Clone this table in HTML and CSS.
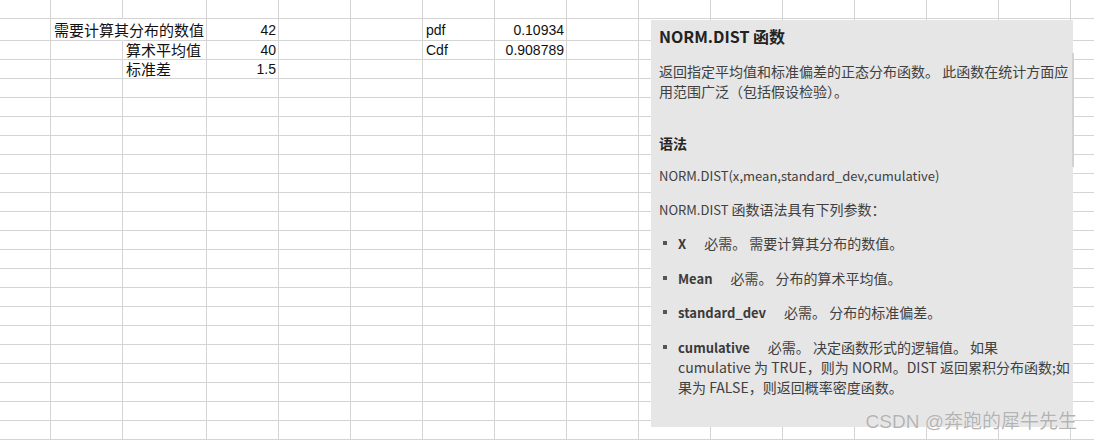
FILE: index.html
```html
<!DOCTYPE html>
<html lang="zh-CN">
<head>
<meta charset="utf-8">
<title>NORM.DIST</title>
<link rel="stylesheet" href="styles.css">
</head>
<body>
<main class="sheet">
  <div class="row"><span></span><span></span><span></span><span></span><span></span><span></span><span></span><span></span><span></span><span></span><span></span><span></span><span></span><span></span><span></span><span></span></div>
  <div class="row tall"><span></span><span class="nb"></span><span class="r"><em class="cjk">需要计算其分布的数值</em></span><span class="r">42</span><span></span><span></span><span>pdf</span><span class="r">0.10934</span><span></span><span></span><span></span><span></span><span></span><span></span><span></span><span></span></div>
  <div class="row"><span></span><span></span><span><em class="cjk">算术平均值</em></span><span class="r">40</span><span></span><span></span><span>Cdf</span><span class="r">0.908789</span><span></span><span></span><span></span><span></span><span></span><span></span><span></span><span></span></div>
  <div class="row"><span></span><span></span><span><em class="cjk">标准差</em></span><span class="r">1.5</span><span></span><span></span><span></span><span></span><span></span><span></span><span></span><span></span><span></span><span></span><span></span><span></span></div>
  <div class="row"><span></span><span></span><span></span><span></span><span></span><span></span><span></span><span></span><span></span><span></span><span></span><span></span><span></span><span></span><span></span><span></span></div>
  <div class="row"><span></span><span></span><span></span><span></span><span></span><span></span><span></span><span></span><span></span><span></span><span></span><span></span><span></span><span></span><span></span><span></span></div>
  <div class="row"><span></span><span></span><span></span><span></span><span></span><span></span><span></span><span></span><span></span><span></span><span></span><span></span><span></span><span></span><span></span><span></span></div>
  <div class="row"><span></span><span></span><span></span><span></span><span></span><span></span><span></span><span></span><span></span><span></span><span></span><span></span><span></span><span></span><span></span><span></span></div>
  <div class="row"><span></span><span></span><span></span><span></span><span></span><span></span><span></span><span></span><span></span><span></span><span></span><span></span><span></span><span></span><span></span><span></span></div>
  <div class="row"><span></span><span></span><span></span><span></span><span></span><span></span><span></span><span></span><span></span><span></span><span></span><span></span><span></span><span></span><span></span><span></span></div>
  <div class="row"><span></span><span></span><span></span><span></span><span></span><span></span><span></span><span></span><span></span><span></span><span></span><span></span><span></span><span></span><span></span><span></span></div>
  <div class="row"><span></span><span></span><span></span><span></span><span></span><span></span><span></span><span></span><span></span><span></span><span></span><span></span><span></span><span></span><span></span><span></span></div>
  <div class="row"><span></span><span></span><span></span><span></span><span></span><span></span><span></span><span></span><span></span><span></span><span></span><span></span><span></span><span></span><span></span><span></span></div>
  <div class="row"><span></span><span></span><span></span><span></span><span></span><span></span><span></span><span></span><span></span><span></span><span></span><span></span><span></span><span></span><span></span><span></span></div>
  <div class="row"><span></span><span></span><span></span><span></span><span></span><span></span><span></span><span></span><span></span><span></span><span></span><span></span><span></span><span></span><span></span><span></span></div>
  <div class="row"><span></span><span></span><span></span><span></span><span></span><span></span><span></span><span></span><span></span><span></span><span></span><span></span><span></span><span></span><span></span><span></span></div>
  <div class="row"><span></span><span></span><span></span><span></span><span></span><span></span><span></span><span></span><span></span><span></span><span></span><span></span><span></span><span></span><span></span><span></span></div>
  <div class="row"><span></span><span></span><span></span><span></span><span></span><span></span><span></span><span></span><span></span><span></span><span></span><span></span><span></span><span></span><span></span><span></span></div>
  <div class="row"><span></span><span></span><span></span><span></span><span></span><span></span><span></span><span></span><span></span><span></span><span></span><span></span><span></span><span></span><span></span><span></span></div>
  <div class="row"><span></span><span></span><span></span><span></span><span></span><span></span><span></span><span></span><span></span><span></span><span></span><span></span><span></span><span></span><span></span><span></span></div>
  <div class="row"><span></span><span></span><span></span><span></span><span></span><span></span><span></span><span></span><span></span><span></span><span></span><span></span><span></span><span></span><span></span><span></span></div>
  <div class="row"><span></span><span></span><span></span><span></span><span></span><span></span><span></span><span></span><span></span><span></span><span></span><span></span><span></span><span></span><span></span><span></span></div>
  <div class="row"><span></span><span></span><span></span><span></span><span></span><span></span><span></span><span></span><span></span><span></span><span></span><span></span><span></span><span></span><span></span><span></span></div>
</main>

<aside class="help">
  <h1 class="help-title">NORM.DIST 函数</h1>
  <p class="help-desc">返回指定平均值和标准偏差的正态分布函数。 此函数在统计方面应用范围广泛（包括假设检验）。</p>
  <h2 class="help-sub">语法</h2>
  <p class="help-syntax">NORM.DIST(x,mean,standard_dev,cumulative)</p>
  <p class="help-intro"><span class="lat">NORM.DIST</span> 函数语法具有下列参数：</p>
  <ul class="args">
    <li><b>X</b>必需。 需要计算其分布的数值。</li>
    <li><b>Mean</b>必需。 分布的算术平均值。</li>
    <li><b>standard_dev</b>必需。 分布的标准偏差。</li>
    <li><b>cumulative</b>必需。 决定函数形式的逻辑值。 如果 cumulative 为 TRUE，则为 NORM。DIST 返回累积分布函数;如果为 FALSE，则返回概率密度函数。</li>
  </ul>
  <div class="scroll"></div>
</aside>

<div class="watermark">CSDN @奔跑的犀牛先生</div>
</body>
</html>
```

FILE: styles.css
```css
* { box-sizing: border-box; }

html, body {
  margin: 0;
  padding: 0;
  background: #ffffff;
}

body {
  width: 1094px;
  height: 440px;
  overflow: hidden;
  position: relative;
  font-family: "Liberation Sans", "Noto Sans CJK SC", sans-serif;
}

.sheet {
  display: flex;
  flex-direction: column;
}

.row {
  display: grid;
  grid-template-columns: 51px 72px 84px repeat(12, 72px) 1fr;
  height: 19px;
}

.row.tall { height: 22px; }

.row > span {
  display: flex;
  align-items: flex-end;
  justify-content: flex-start;
  border-right: 1px solid #d4d4d4;
  border-bottom: 1px solid #d4d4d4;
  padding: 0 2px 1px 3px;
  font-size: 14px;
  line-height: 16px;
  color: #111111;
  white-space: nowrap;
  overflow: visible;
}

.row > span:last-child { border-right: none; }

.row > span.nb { border-right-color: transparent; }

.row > span.r { justify-content: flex-end; }

.row.tall > span { padding-bottom: 2px; }

.cjk {
  font-style: normal;
  font-size: 15px;
  font-family: "Noto Sans CJK SC", sans-serif;
}

.help {
  position: absolute;
  left: 651px;
  top: 20px;
  width: 422px;
  height: 407px;
  background: #e6e6e6;
  padding: 6px 3px 0 8px;
  font-family: "Noto Sans CJK SC", sans-serif;
  font-size: 14px;
  line-height: 20px;
  color: #404040;
}

.help-title {
  margin: 0;
  font-size: 16px;
  font-weight: 700;
  line-height: 20px;
  color: #222222;
}

.help-desc { margin: 15px 0 0; }

.help-sub {
  margin: 32px 0 0;
  font-size: 14px;
  font-weight: 700;
  line-height: 20px;
  color: #262626;
}

.help-syntax {
  margin: 13px 0 0;
  font-size: 13px;
}

.help-intro { margin: 13px 0 0; }

.lat {
  font-size: 13px;
  line-height: 1;
}

.args {
  list-style: none;
  margin: 14px 0 0;
  padding: 0 0 0 19px;
}

.args li {
  position: relative;
  margin-top: 14.5px;
}

.args li:first-child { margin-top: 0; }

.args li::before {
  content: "";
  position: absolute;
  left: -15px;
  top: 8px;
  width: 4px;
  height: 4px;
  background: #555555;
}

.args b {
  font-size: 13px;
  line-height: 1;
  font-weight: 700;
  color: #3a3a3a;
  margin-right: 18px;
}

.scroll {
  position: absolute;
  right: -1px;
  top: 33px;
  width: 2px;
  height: 114px;
  background: #d2d2d2;
}

.watermark {
  position: absolute;
  right: 17px;
  top: 410px;
  font-family: "Liberation Sans", "Noto Sans CJK SC", sans-serif;
  font-size: 19px;
  line-height: 24px;
  color: #b3b3b3;
  text-shadow: 0 0 1px #ffffff;
  white-space: nowrap;
}
```
